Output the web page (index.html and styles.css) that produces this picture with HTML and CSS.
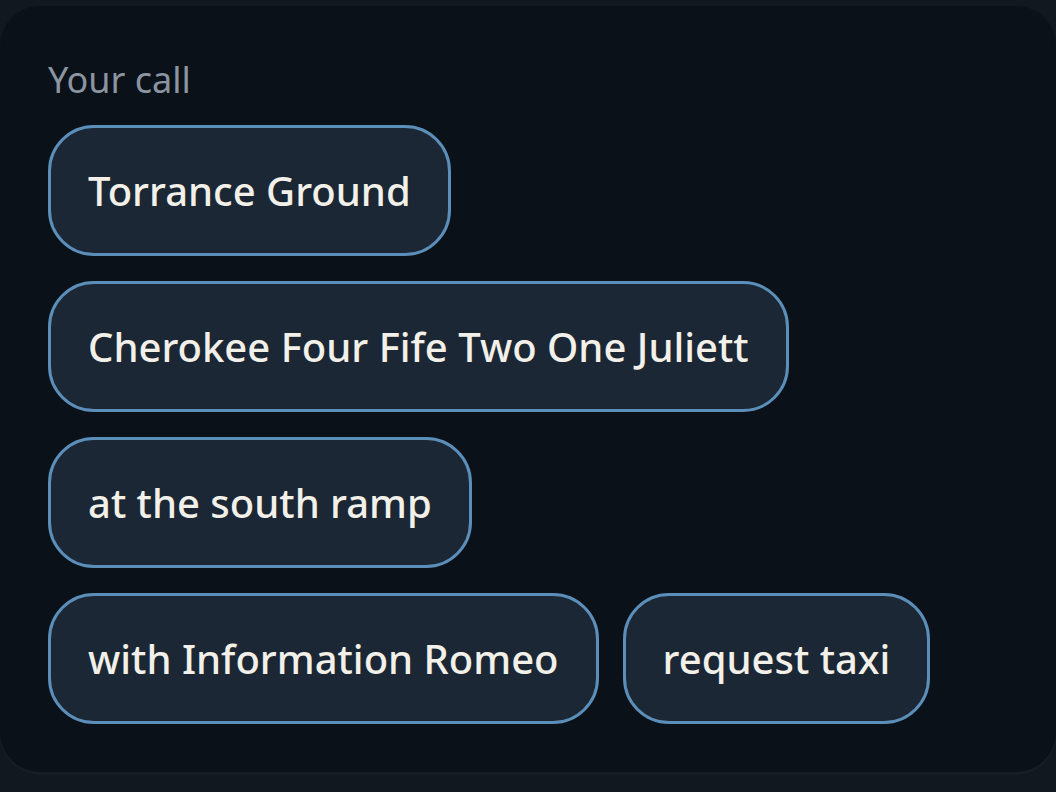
FILE: index.html
```html
<!DOCTYPE html>
<html lang="en">
<head>
    <meta charset="UTF-8">
    <meta name="viewport" content="width=device-width, initial-scale=1.0">
    <title>Readback</title>
    <link rel="stylesheet" href="styles.css">
</head>
<body>
    <div class="card">
        <div class="label">Your call</div>
        <div class="chips">
            <div class="chip-row">
                <button class="chip">Torrance Ground</button>
            </div>
            <div class="chip-row">
                <button class="chip">Cherokee Four Fife Two One Juliett</button>
            </div>
            <div class="chip-row">
                <button class="chip">at the south ramp</button>
            </div>
            <div class="chip-row">
                <button class="chip">with Information Romeo</button>
                <button class="chip">request taxi</button>
            </div>
        </div>
    </div>
</body>
</html>
```

FILE: styles.css
```css
body {
    margin: 0;
    height: 792px;
    background-color: #121820;
    font-family: "Noto Sans", "Open Sans", sans-serif;
    overflow: hidden;
}
.card {
    margin-top: 6px;
    height: 766px;
    box-sizing: border-box;
    padding: 56px 48px 48px;
    background-color: #0a1118;
    border-radius: 40px;
    box-shadow: 0 3px 0 #171d25;
}
.label {
    color: #8b95a2;
    font-size: 36px;
    line-height: 36px;
}
.chips {
    margin-top: 27px;
    display: flex;
    flex-direction: column;
    gap: 25px;
}
.chip-row {
    display: flex;
    gap: 24px;
}
.chip {
    height: 131px;
    box-sizing: border-box;
    padding: 0 37px;
    border: 3px solid #5b8fba;
    border-radius: 46px;
    background-color: #1b2734;
    color: #f2f0e8;
    font-family: inherit;
    font-size: 40px;
    font-weight: 500;
    cursor: pointer;
}
```
